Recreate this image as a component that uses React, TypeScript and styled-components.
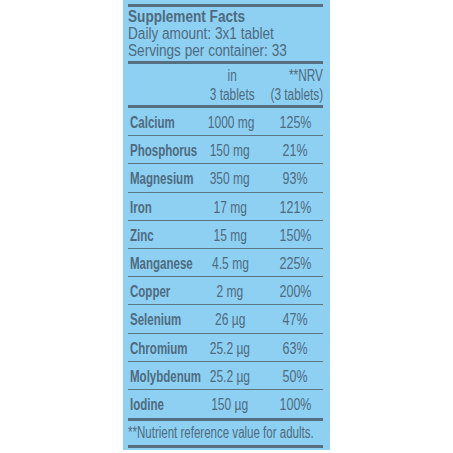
import React from 'react';
import styled, { createGlobalStyle } from 'styled-components';

interface Nutrient {
  name: string;
  amount: string;
  nrv: string;
}

const nutrients: Nutrient[] = [
  { name: 'Calcium', amount: '1000 mg', nrv: '125%' },
  { name: 'Phosphorus', amount: '150 mg', nrv: '21%' },
  { name: 'Magnesium', amount: '350 mg', nrv: '93%' },
  { name: 'Iron', amount: '17 mg', nrv: '121%' },
  { name: 'Zinc', amount: '15 mg', nrv: '150%' },
  { name: 'Manganese', amount: '4.5 mg', nrv: '225%' },
  { name: 'Copper', amount: '2 mg', nrv: '200%' },
  { name: 'Selenium', amount: '26 µg', nrv: '47%' },
  { name: 'Chromium', amount: '25.2 µg', nrv: '63%' },
  { name: 'Molybdenum', amount: '25.2 µg', nrv: '50%' },
  { name: 'Iodine', amount: '150 µg', nrv: '100%' },
];

const App = () => {
  return (
    <>
      <GlobalStyle />
      <Page>
        <Panel>
          <ThickRule />
          <Intro>
            <Title><Narrow $scale={0.85}>Supplement Facts</Narrow></Title>
            <InfoLine><Narrow $scale={0.85}>Daily amount: 3x1 tablet</Narrow></InfoLine>
            <InfoLine><Narrow $scale={0.85}>Servings per container: 33</Narrow></InfoLine>
          </Intro>
          <ThickRule />
          <HeadRow>
            <span />
            <HeadCell>
              <Narrow $scale={0.74} $origin="center">in</Narrow>
              <Narrow $scale={0.74} $origin="center">3 tablets</Narrow>
            </HeadCell>
            <HeadCell $right>
              <Narrow $scale={0.74} $origin="right">**NRV</Narrow>
              <Narrow $scale={0.74} $origin="right">(3 tablets)</Narrow>
            </HeadCell>
          </HeadRow>
          <ThickRule />
          {nutrients.map((n, i) => (
            <Row key={n.name} $last={i === nutrients.length - 1}>
              <Name><Narrow $scale={0.72}>{n.name}</Narrow></Name>
              <Amount><Narrow $scale={0.75} $origin="center">{n.amount}</Narrow></Amount>
              <Nrv><Narrow $scale={0.78} $origin="center">{n.nrv}</Narrow></Nrv>
            </Row>
          ))}
          <ThickRule />
          <Footnote><Narrow $scale={0.72}>**Nutrient reference value for adults.</Narrow></Footnote>
          <ThickRule />
        </Panel>
      </Page>
    </>
  );
};

export default App;

const GlobalStyle = createGlobalStyle`
  body {
    margin: 0;
    background: #ffffff;
  }
`;

const Page = styled.div`
  width: 453px;
  height: 453px;
  display: flex;
  justify-content: flex-start;
  padding-left: 123px;
  box-sizing: border-box;
`;

const Panel = styled.div`
  width: 207px;
  height: 450px;
  background: #8ed0f2;
  padding: 4px 7px 0 5px;
  box-sizing: border-box;
  display: flex;
  flex-direction: column;
  color: #4d6b80;
  font-family: 'Liberation Sans', Arial, sans-serif;
`;

// no condensed face installed, so squeeze the glyphs horizontally
const Narrow = styled.span<{ $scale: number; $origin?: string }>`
  display: inline-block;
  white-space: nowrap;
  transform: scaleX(${(p) => p.$scale});
  transform-origin: ${(p) => p.$origin ?? 'left'} center;
`;

const ThickRule = styled.div`
  height: 3px;
  background: #566f80;
  flex-shrink: 0;
`;

const Intro = styled.div`
  padding: 1px 0 2px;
`;

const Title = styled.div`
  font-weight: bold;
  font-size: 16px;
  line-height: 17px;
`;

const InfoLine = styled.div`
  font-size: 16px;
  line-height: 17px;
`;

const HeadRow = styled.div`
  display: grid;
  grid-template-columns: 73px 62px minmax(0, 1fr);
  padding: 2px 0 1px;
`;

const HeadCell = styled.div<{ $right?: boolean }>`
  display: flex;
  flex-direction: column;
  align-items: ${(p) => (p.$right ? 'flex-end' : 'center')};
  font-size: 16px;
  line-height: 19px;
`;

const Row = styled.div<{ $last?: boolean }>`
  display: grid;
  grid-template-columns: 72px 60px minmax(0, 1fr);
  align-items: center;
  height: 28.2px;
  padding-top: 3px;
  box-sizing: border-box;
  border-bottom: ${(p) => (p.$last ? 'none' : '1px solid #5c7586')};
  font-size: 16px;
`;

const Name = styled.div`
  font-weight: bold;
  padding-left: 2px;
`;

const Amount = styled.div`
  text-align: center;
`;

const Nrv = styled.div`
  text-align: center;
  padding-left: 8px;
`;

const Footnote = styled.div`
  font-size: 16px;
  line-height: 24px;
`;
